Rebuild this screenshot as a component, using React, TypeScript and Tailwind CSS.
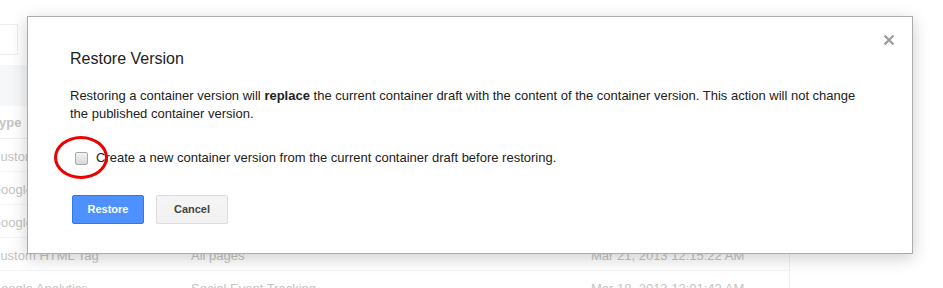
import React from 'react';

const rows = [
  { name: 'Custom HTML Tag', rule: '', date: '' },
  { name: 'Google Analytics', rule: '', date: '' },
  { name: 'Google Analytics', rule: '', date: '' },
  { name: 'Custom HTML Tag', rule: 'All pages', date: 'Mar 21, 2013 12:15:22 AM' },
  { name: 'Google Analytics', rule: 'Social Event Tracking', date: 'Mar 18, 2013 12:01:42 AM' },
];

const Backdrop: React.FC = () => (
  <div className="text-[13px] text-[#c4c4c4]">
    <div className="pt-[24px]">
      <div className="ml-[-10px] h-[31px] w-[28px] border border-[#ececec] bg-white" />
    </div>
    <div className="mt-[10px] w-[790px] border-r border-[#f0f0f0]">
      <div className="h-[41px] bg-[#f6f7f9]" />
      <div className="flex h-[33px] items-center border-b border-[#f0f0f0] pl-[-10px] pt-[2px] font-bold">
        <span className="ml-[-8px]">Type</span>
      </div>
      {rows.map((r, i) => (
        <div key={i} className="flex h-[33px] border-b border-[#f4f4f4] pt-[9px] leading-[18px]">
          <span className="ml-[-9px] w-[200px] shrink-0 whitespace-nowrap">{r.name}</span>
          <span className="w-[400px] shrink-0 whitespace-nowrap">{r.rule}</span>
          <span className="whitespace-nowrap">{r.date}</span>
        </div>
      ))}
    </div>
  </div>
);

export default function App() {
  return (
    <div
      className="relative h-[288px] w-[943px] overflow-hidden bg-white"
      style={{ fontFamily: '"Liberation Sans", Arial, sans-serif' }}
    >
      <Backdrop />

      <div className="absolute left-[27px] top-[16px] h-[238px] w-[886px] border border-[#acacac] bg-white px-[42px] pt-[32px] shadow-[0_4px_16px_rgba(0,0,0,0.2)]">
        <button className="absolute right-[17px] top-[17px] flex h-[12px] w-[12px] items-center justify-center">
          <svg width="12" height="12" viewBox="0 0 12 12">
            <path d="M1.5 1.5 L10.5 10.5 M10.5 1.5 L1.5 10.5" stroke="#9a9a9a" strokeWidth="2.2" />
          </svg>
        </button>

        <h1 className="text-[16px] leading-[20px] text-[#222]">Restore Version</h1>

        <p className="mt-[18px] text-[13px] leading-[18px] text-[#222]">
          Restoring a container version will <b>replace</b> the current container draft with the content of the
          container version. This action will not change the published container version.
        </p>

        <label className="mt-[26px] flex items-center text-[13px] leading-[18px] text-[#222]">
          <span className="ml-[5px] mr-[8px] h-[13px] w-[13px] rounded-[2px] border border-[#a8a8a8] bg-gradient-to-b from-[#f2f2f2] to-[#d8d8d8]" />
          Create a new container version from the current container draft before restoring.
        </label>

        <div className="mt-[28px] flex gap-[12px] pl-[2px]">
          <button className="h-[29px] w-[72px] rounded-[2px] border border-[#3079ed] bg-[#4d90fe] text-[11px] font-bold text-white">
            Restore
          </button>
          <button className="h-[29px] w-[72px] rounded-[2px] border border-[#dcdcdc] bg-gradient-to-b from-[#f5f5f5] to-[#f1f1f1] text-[11px] font-bold text-[#444]">
            Cancel
          </button>
        </div>
      </div>

      <div className="absolute left-[54px] top-[136px] h-[43px] w-[54px] rounded-[50%] border-[3px] border-[#ee0000]" />
    </div>
  );
}
